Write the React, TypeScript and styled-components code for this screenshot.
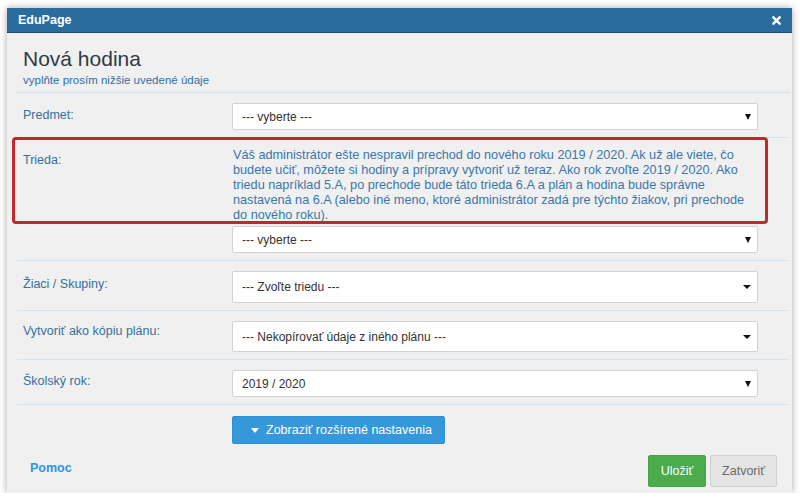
import React from "react";
import styled, { createGlobalStyle } from "styled-components";
import { FaTimes } from "react-icons/fa";

const Global = createGlobalStyle`
  html, body { margin: 0; padding: 0; background: #ffffff; }
  body { font-family: "Liberation Sans", Arial, sans-serif; }
  * { box-sizing: border-box; }
`;

const Page = styled.div`
  padding: 8px 8px 0 7px;
`;

const Dialog = styled.div`
  width: 785px;
  background: #f0f0f0;
  box-shadow: 0 0 7px rgba(0, 0, 0, 0.35);
`;

const Header = styled.div`
  height: 25px;
  background: #2b6c9f;
  border-bottom: 1px solid #1d4d74;
  display: flex;
  align-items: center;
  justify-content: space-between;
  padding: 0 9px 0 11px;
  color: #ffffff;
`;

const HeaderTitle = styled.span`
  font-size: 12.5px;
  font-weight: bold;
`;

const Close = styled.span`
  display: flex;
  align-items: center;
  color: #ffffff;
`;

const Body = styled.div`
  padding: 0 2px 6px 10px;
`;

const Intro = styled.div`
  padding: 14px 6px 5px;
  border-bottom: 1px solid #cfe0ef;
`;

const Title = styled.h1`
  margin: 0;
  font-size: 21px;
  line-height: 24px;
  font-weight: normal;
  color: #2f3a45;
`;

const Subtitle = styled.div`
  margin-top: 2px;
  font-size: 11.5px;
  line-height: 14px;
  color: #2f6fa6;
`;

const Row = styled.div`
  position: relative;
  display: grid;
  grid-template-columns: 209px 526px;
  padding: 10px 32px 7px 6px;
  border-bottom: 1px solid #d6e4f0;
`;

const Label = styled.div<{ $pt: number }>`
  padding-top: ${(p) => p.$pt}px;
  font-size: 12.5px;
  line-height: 17px;
  color: #34709f;
`;

const Control = styled.div`
  display: flex;
  flex-direction: column;
`;

const Select = styled.div<{ $h: number }>`
  height: ${(p) => p.$h}px;
  background: #ffffff;
  border: 1px solid #d2d2d2;
  border-radius: 2px;
  display: flex;
  align-items: center;
  justify-content: space-between;
  padding: 0 6px 0 9px;
  font-size: 12px;
  color: #333333;
`;

const Arrow = styled.span<{ $flat?: boolean }>`
  width: 0;
  height: 0;
  border-left: ${(p) => (p.$flat ? 4 : 3.5)}px solid transparent;
  border-right: ${(p) => (p.$flat ? 4 : 3.5)}px solid transparent;
  border-top: ${(p) => (p.$flat ? 4 : 6)}px solid #111111;
`;

const Info = styled.div`
  margin: 0 0 3px 1px;
  font-size: 12.7px;
  line-height: 15px;
  color: #3a76ac;
  white-space: pre;
`;

const Highlight = styled.div`
  position: absolute;
  left: -5px;
  top: -1px;
  width: 756px;
  height: 87px;
  border: 3px solid #c4262e;
  border-radius: 4px;
  pointer-events: none;
`;

const MoreRow = styled.div`
  padding: 11px 0 0 215px;
`;

const MoreButton = styled.button`
  height: 28px;
  display: inline-flex;
  align-items: center;
  gap: 7px;
  padding: 0 12px 0 18px;
  background: #3598db;
  border: 1px solid #2f8fd1;
  border-radius: 2px;
  color: #ffffff;
  font-family: "Liberation Sans", Arial, sans-serif;
  font-size: 12.5px;
`;

const Caret = styled.span`
  width: 0;
  height: 0;
  border-left: 4px solid transparent;
  border-right: 4px solid transparent;
  border-top: 5px solid #ffffff;
`;

const Footer = styled.div`
  margin-top: 11px;
  padding: 0 13px;
  display: flex;
  justify-content: space-between;
  align-items: flex-start;
`;

const Help = styled.a`
  padding-top: 6px;
  font-size: 12.5px;
  line-height: 15px;
  font-weight: bold;
  color: #2b95e9;
  text-decoration: none;
`;

const Actions = styled.div`
  display: flex;
  gap: 4px;
`;

const ActionButton = styled.button<{ $primary?: boolean }>`
  height: 32px;
  padding: 0 ${(p) => (p.$primary ? 12 : 11)}px;
  border-radius: 2px;
  border: 1px solid ${(p) => (p.$primary ? "#45a445" : "#d0d0d0")};
  background: ${(p) => (p.$primary ? "#4cac4c" : "#e4e4e4")};
  color: ${(p) => (p.$primary ? "#ffffff" : "#6a6a6a")};
  font-family: "Liberation Sans", Arial, sans-serif;
  font-size: 12.5px;
`;

const infoText =
  "Váš administrátor ešte nespravil prechod do nového roku 2019 / 2020. Ak už ale viete, čo\n" +
  "budete učiť, môžete si hodiny a prípravy vytvoriť už teraz. Ako rok zvoľte 2019 / 2020. Ako\n" +
  "triedu napríklad 5.A, po prechode bude táto trieda 6.A a plán a hodina bude správne\n" +
  "nastavená na 6.A (alebo iné meno, ktoré administrátor zadá pre týchto žiakov, pri prechode\n" +
  "do nového roku).";

export default function App() {
  return (
    <>
      <Global />
      <Page>
        <Dialog>
          <Header>
            <HeaderTitle>EduPage</HeaderTitle>
            <Close>
              <FaTimes size={13} />
            </Close>
          </Header>
          <Body>
            <Intro>
              <Title>Nová hodina</Title>
              <Subtitle>vyplňte prosím nižšie uvedené údaje</Subtitle>
            </Intro>

            <Row>
              <Label $pt={4}>Predmet:</Label>
              <Control>
                <Select $h={27}>
                  <span>--- vyberte ---</span>
                  <Arrow />
                </Select>
              </Control>
            </Row>

            <Row>
              <Label $pt={4}>Trieda:</Label>
              <Control>
                <Info>{infoText}</Info>
                <Select $h={27}>
                  <span>--- vyberte ---</span>
                  <Arrow />
                </Select>
              </Control>
              <Highlight />
            </Row>

            <Row>
              <Label $pt={5}>Žiaci / Skupiny:</Label>
              <Control>
                <Select $h={32}>
                  <span>--- Zvoľte triedu ---</span>
                  <Arrow $flat />
                </Select>
              </Control>
            </Row>

            <Row>
              <Label $pt={2}>Vytvoriť ako kópiu plánu:</Label>
              <Control>
                <Select $h={31}>
                  <span>--- Nekopírovať údaje z iného plánu ---</span>
                  <Arrow $flat />
                </Select>
              </Control>
            </Row>

            <Row>
              <Label $pt={3}>Školský rok:</Label>
              <Control>
                <Select $h={27}>
                  <span>2019 / 2020</span>
                  <Arrow />
                </Select>
              </Control>
            </Row>

            <MoreRow>
              <MoreButton>
                <Caret />
                Zobraziť rozšírené nastavenia
              </MoreButton>
            </MoreRow>

            <Footer>
              <Help href="#">Pomoc</Help>
              <Actions>
                <ActionButton $primary>Uložiť</ActionButton>
                <ActionButton>Zatvoriť</ActionButton>
              </Actions>
            </Footer>
          </Body>
        </Dialog>
      </Page>
    </>
  );
}
